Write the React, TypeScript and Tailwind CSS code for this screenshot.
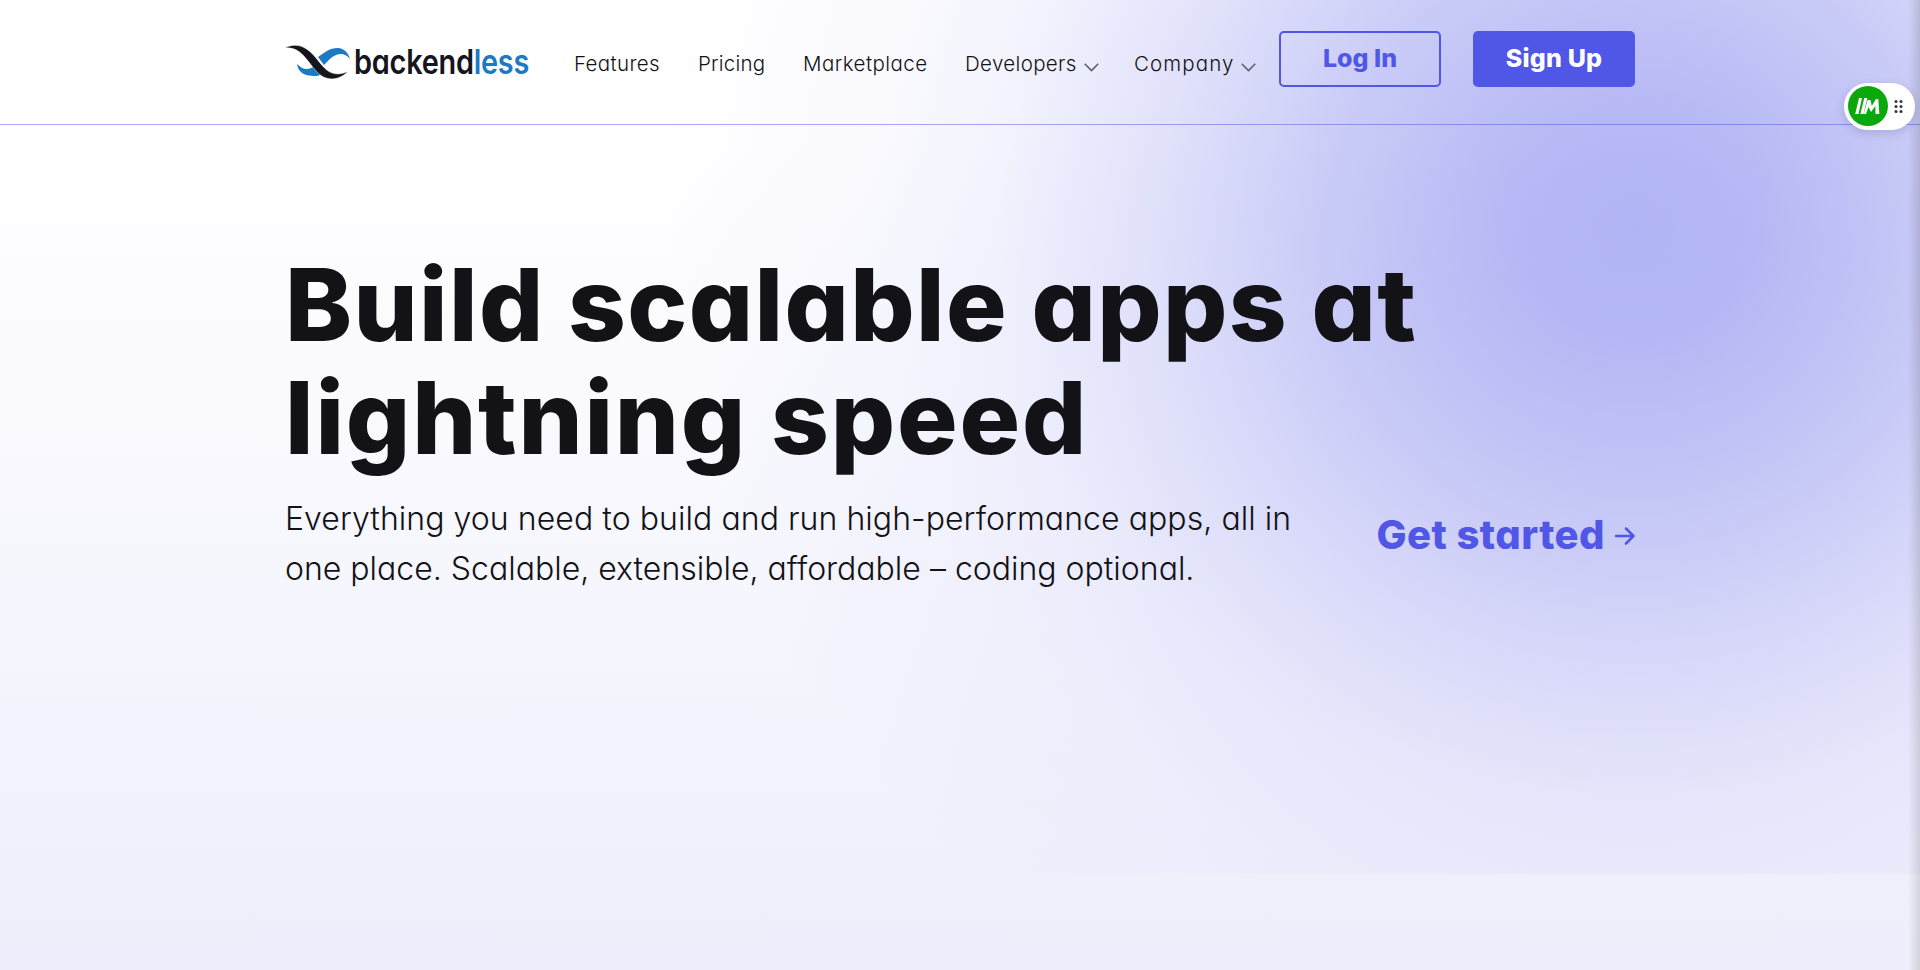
const font = "font-[Inter,'Open_Sans',sans-serif] [font-feature-settings:'cv11']";

function Logo() {
  return (
    <div className="flex h-[34px] w-[248px] items-start">
      <svg className="h-[34px] w-[66px] shrink-0" viewBox="0 0 66 34" aria-label="backendless">
        <path d="M12 19c4 4 8 6 13 4.500l5-2.500 7 8c-5 3-10 2-13 1.500-7-1-11-5-12-11.500zM33 12c6-4 11-9 20-9 6 .5 10 4.500 12 11-4-5-9-6-14-4-5 2-8 6-12 10z" fill="#1c79c4" />
        <path d="M0 3c6-3.500 13-3.500 19-.5 9 4.500 14 14 21 21 6 6 14 7 23 3-6 6-13 8.500-20 7-10-2-15-12-22-20C16 7 9 2 0 3z" fill="#15151c" stroke="#fff" strokeWidth=".5" />
      </svg>
      <span className="ml-[2.500px] origin-left scale-x-[0.85] text-[34px] leading-[34px] font-semibold tracking-[-0.3px] text-[#15151c]">backend<span className="text-[#1c79c4]">less</span></span>
    </div>
  );
}

function Chevron() {
  return (
    <svg className="mt-1.5 h-[9px] w-[15px]" viewBox="0 0 15 9" fill="none" stroke="#60606f" strokeWidth="1.600">
      <path d="M.7.8l6.800 6.800L14.300.8" />
    </svg>
  );
}

function Widget() {
  return (
    <div className="absolute top-[83px] right-[5px] flex h-[47px] w-[71px] items-center rounded-full bg-white pl-1 shadow-[0_3px_10px_rgba(60,60,110,0.2)]">
      <svg className="-mt-px h-10 w-10" viewBox="0 0 40 40">
        <circle cx="20" cy="20" r="20" fill="#0aa80a" />
        <path d="M11 12h3L10.500 28H7.200zM16.300 12h3L15.600 28h-3.200zM19.500 14h3l1.300 6L28 13h2.300L31.300 28H27.500l-.2-8-4.300 6-2.500-5L18 28h-2.200z" fill="#fff" />
      </svg>
      <svg className="ml-[6px] h-[13px] w-[9px]" viewBox="0 0 9 13" fill="#343441">
        {[1.5, 6.5, 11.5].map((y) => (
          <g key={y}><circle cx="2" cy={y} r="1.500" /><circle cx="7" cy={y} r="1.500" /></g>
        ))}
      </svg>
    </div>
  );
}

export default function App() {
  return (
    <div className={`${font} relative h-[970px] w-full overflow-hidden bg-linear-to-b from-white from-[15%] to-[#eeeefc] text-[#131217]`}>
      <div className="absolute inset-x-0 top-0 h-[874px] bg-[radial-gradient(ellipse_850px_790px_at_1635px_220px,rgba(80,86,230,0.44)_0%,rgba(80,86,230,0.41)_15%,rgba(80,86,230,0.31)_35%,rgba(80,86,230,0.17)_57%,rgba(80,86,230,0.07)_75%,rgba(80,86,230,0.03)_90%,transparent_115%)]" />
      <div className="relative">
        <header className="h-[125px] border-b border-[#5056e6]/50">
          <div className="mx-auto flex w-[1350px] items-start">
            <a className="mt-[45px] w-[244px]"><Logo /></a>
            <nav className="mt-[49px] flex text-[20.500px] leading-[30px] font-light whitespace-nowrap">
              <a className="ml-[45px] w-[124px] tracking-[0.350px]">Features</a>
              <a className="w-[105px] tracking-[0.2px]">Pricing</a>
              <a className="w-[162px] tracking-[0.450px]">Marketplace</a>
              <a className="flex w-[169px] items-center tracking-[0.350px]"><span className="w-[119px]">Developers</span><Chevron /></a>
              <a className="flex w-[145px] items-center tracking-[1.1px]"><span className="w-[107px]">Company</span><Chevron /></a>
            </nav>
            <div className="mt-[31px] ml-auto flex gap-8 text-[25px] font-extrabold">
              <button className="h-14 w-[162px] rounded-[5px] border-2 border-[#5056e6] text-[#5056e6]">Log In</button>
              <button className="h-14 w-[162px] rounded-[5px] bg-[#5056e6] tracking-[0.2px] text-white">Sign Up</button>
            </div>
          </div>
        </header>
        <main className="mx-auto w-[1350px] pt-[123px]">
          <h1 className="text-[101px] leading-[113px] font-extrabold whitespace-nowrap">
            <span className="block tracking-[1.350px]">Build scalable apps at</span>
            <span className="block tracking-[1.800px]">lightning speed</span>
          </h1>
          <div className="mt-5 flex items-center justify-between">
            <p className="text-[32px] leading-[50px] font-light whitespace-nowrap">
              <span className="tracking-[0.060px]">Everything you need to build and run high-performance apps, all in</span><br />one place. Scalable, extensible, affordable – coding optional.
            </p>
            <a className="mb-[18px] flex items-center gap-2.5 text-[40px] font-extrabold whitespace-nowrap text-[#5056e6]">
              <span className="tracking-[0.450px]">Get started</span>
              <svg className="mt-0.5 h-5 w-5" viewBox="0 0 20 20" fill="none" stroke="#5056e6" strokeWidth="2.500" strokeLinecap="round" strokeLinejoin="round"><path d="M1 10h17M11 2.500L18.500 10 11 17.500" /></svg>
            </a>
          </div>
        </main>
      </div>
      <div className="absolute inset-y-0 right-0 w-3 bg-linear-to-r from-transparent to-black/12" />
      <Widget />
    </div>
  );
}
